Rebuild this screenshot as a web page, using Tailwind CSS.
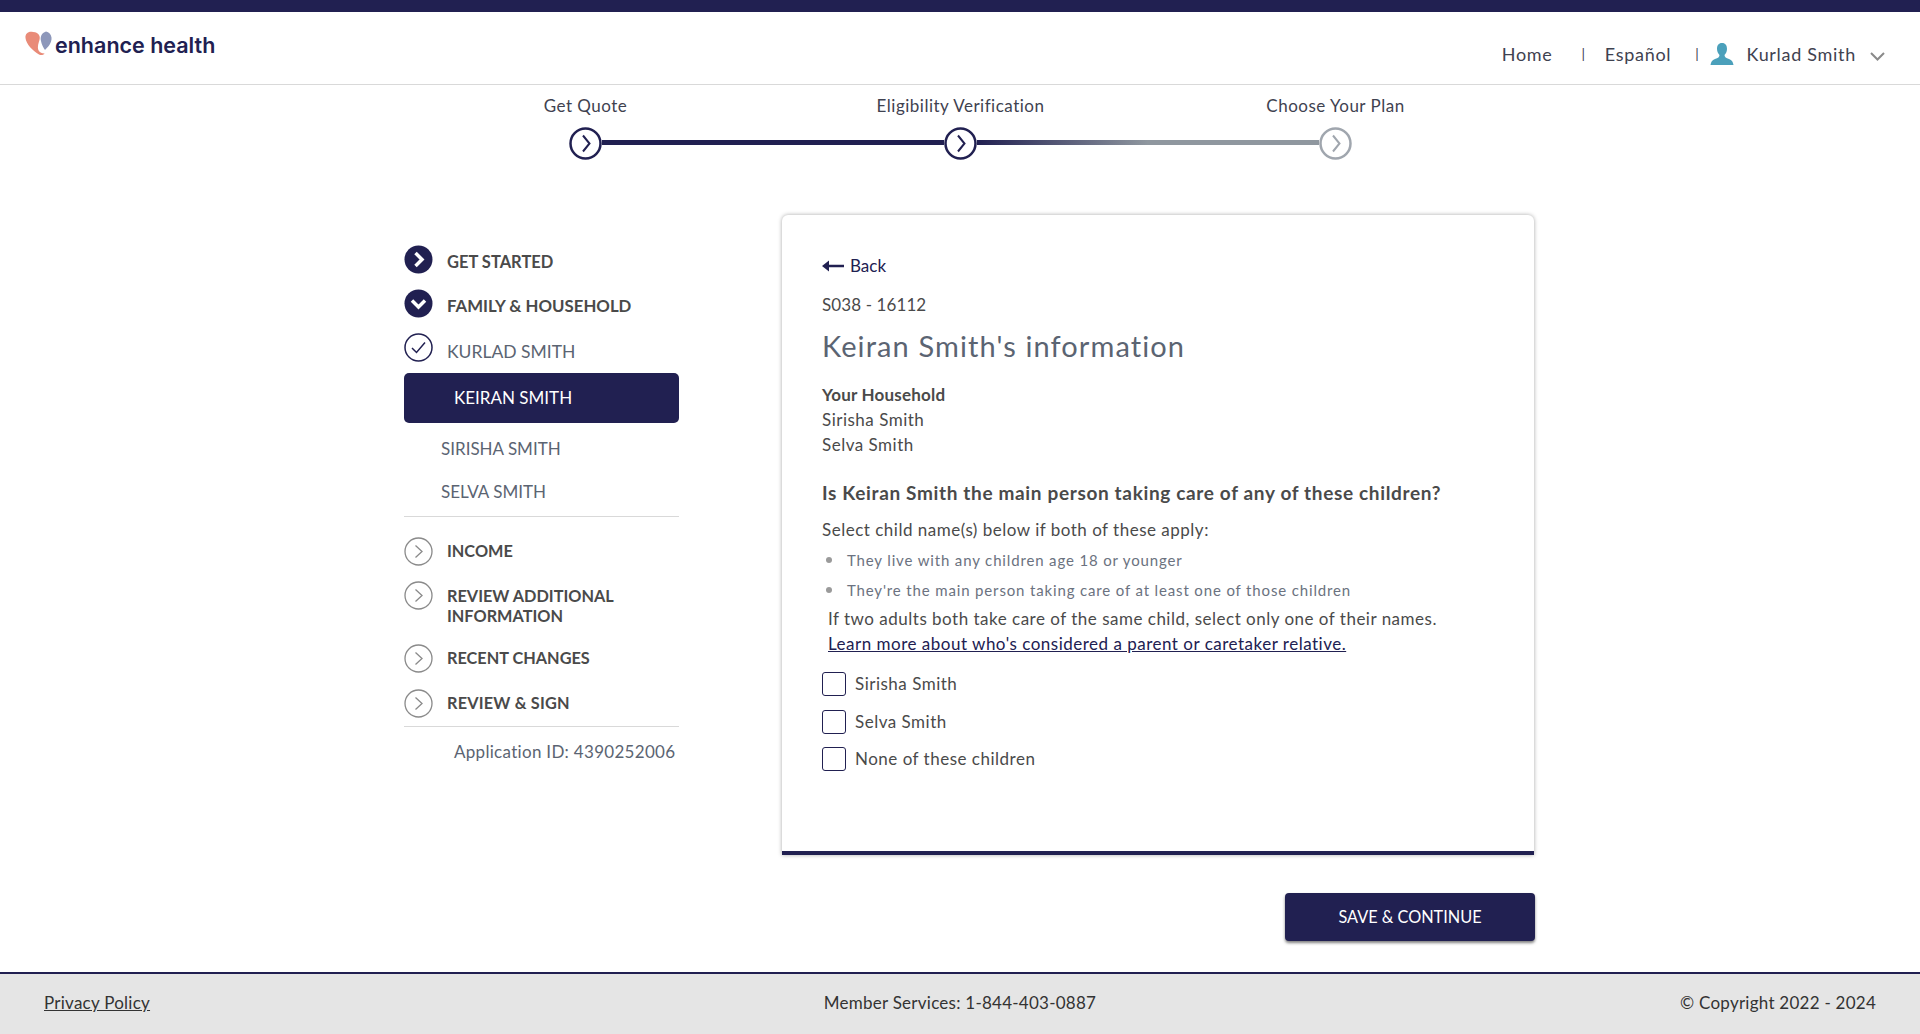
<!DOCTYPE html>
<html lang="en">
<head>
    <meta charset="UTF-8">
    <meta name="viewport" content="width=device-width, initial-scale=1.0">
    <title>Enhance Health</title>
    <script src="https://cdn.jsdelivr.net/npm/@tailwindcss/browser@4"></script>
</head>
<body class="bg-white h-screen flex flex-col font-['Lato','Liberation_Sans',sans-serif] text-[17px] tracking-[0.5px] text-[#4a4a4a]">
    <!-- Header -->
    <div class="h-3 bg-[#212051] shrink-0"></div>
    <header class="h-[73px] shrink-0 border-b border-[#d9d9d9] flex justify-between">
        <div class="flex items-start pl-[25px] pt-[19px]">
            <svg width="29" height="25" viewBox="0 0 29 25">
                <path d="M8 1C3.500 0 0 2.500 0.500 7C1 13 8 20 14 23.500C16 24.500 19 24 19.500 22.500C14 22 12.500 19 13 15C13.500 11 15.500 8 14.500 5C13.500 2.500 11 1 8 1Z" fill="#e98b78"/>
                <path d="M21 0.500C16.500 2 15 6 16 10C16.500 13 18.500 17 20 19C23 16 27 12 26.500 6.500C26 3 24 1 21 0.500Z" fill="#8d97ba"/>
            </svg>
            <span class="ml-[1px] mt-[2px] font-['Inter',sans-serif] font-semibold tracking-normal text-[21.500px] leading-[24px] text-[#212051]">enhance health</span>
        </div>
        <nav class="flex items-start pt-[29px] text-[#3f4250] text-[18px] tracking-[0.7px] leading-[26px]">
            <a>Home</a>
            <span class="ml-[29px] text-[14px]">|</span>
            <a class="ml-[19px]">Español</a>
            <span class="ml-[24px] text-[14px]">|</span>
            <svg class="ml-[11px] mt-[1px]" width="24" height="23" viewBox="0 0 24 23"><path d="M12 1C8.500 1 7 3.500 7 7C7 10 8.500 12 9.500 13C9.500 15 8 16 5 17C2 18 1 20 0.500 23H23.500C23 20 22 18 19 17C16 16 14.500 15 14.500 13C15.500 12 17 10 17 7C17 3.500 15.500 1 12 1Z" fill="#4ba0bb"/></svg>
            <span class="ml-[12px]">Kurlad Smith</span>
            <svg class="ml-[14px] mr-[35px] mt-[11px]" width="15" height="9" viewBox="0 0 15 9"><path d="M1 1L7.500 7.500L14 1" fill="none" stroke="#8a8a8a" stroke-width="2"/></svg>
        </nav>
    </header>

    <!-- Steps -->
    <div class="h-[130px] shrink-0 pl-[398px] pt-[9px]">
        <div class="flex text-[#3f4250] leading-[24px]">
            <div class="w-[375px] text-center">Get Quote</div>
            <div class="w-[375px] text-center">Eligibility Verification</div>
            <div class="w-[375px] text-center">Choose Your Plan</div>
        </div>
        <div class="flex items-center pl-[171px] mt-[9px]">
            <svg width="33" height="33" viewBox="0 0 33 33" class="shrink-0"><circle cx="16.500" cy="16.500" r="15" fill="#fff" stroke="#212051" stroke-width="2.500"/><path d="M14 8.500L20.500 16.500L14 24.500" fill="none" stroke="#212051" stroke-width="2"/></svg>
            <div class="w-[342px] h-[5px] bg-[#212051] -mt-[2px]"></div>
            <svg width="33" height="33" viewBox="0 0 33 33" class="shrink-0"><circle cx="16.500" cy="16.500" r="15" fill="#fff" stroke="#212051" stroke-width="2.500"/><path d="M14 8.500L20.500 16.500L14 24.500" fill="none" stroke="#212051" stroke-width="2"/></svg>
            <div class="w-[342px] h-[5px] bg-[linear-gradient(to_right,#212051,#8f979f_50%,#8f979f)] -mt-[2px]"></div>
            <svg width="33" height="33" viewBox="0 0 33 33" class="shrink-0"><circle cx="16.500" cy="16.500" r="15" fill="#fff" stroke="#a0a6ae" stroke-width="2.500"/><path d="M14 8.500L20.500 16.500L14 24.500" fill="none" stroke="#a0a6ae" stroke-width="2"/></svg>
        </div>
    </div>

    <main class="flex pl-[404px]">
        <!-- Sidebar -->
        <aside class="w-[275px] pt-[30px] shrink-0 uppercase tracking-normal">
            <div class="h-[44px] flex items-start text-[16.500px]">
                <svg width="29" height="29" viewBox="0 0 29 29" class="shrink-0"><circle cx="14.500" cy="14.500" r="14" fill="#212051"/><path d="M11.500 8L18 14.500L11.500 21" fill="none" stroke="#fff" stroke-width="3.500"/></svg>
                <span class="ml-[14px] mt-[5px] font-bold leading-[24px]">Get Started</span>
            </div>
            <div class="h-[44px] flex items-start text-[16.800px]">
                <svg width="29" height="29" viewBox="0 0 29 29" class="shrink-0"><circle cx="14.500" cy="14.500" r="14" fill="#212051"/><path d="M8 11.500L14.500 18L21 11.500" fill="none" stroke="#fff" stroke-width="3.500"/></svg>
                <span class="ml-[14px] mt-[5px] font-bold leading-[24px]">Family &amp; Household</span>
            </div>
            <div class="h-[40px] flex items-start">
                <svg width="29" height="29" viewBox="0 0 29 29" class="shrink-0"><circle cx="14.500" cy="14.500" r="13.500" fill="none" stroke="#212051" stroke-width="1.500"/><path d="M8 15L12.500 19.500L21 9.500" fill="none" stroke="#212051" stroke-width="1.500"/></svg>
                <span class="ml-[14px] mt-[7px] text-[17.500px] leading-[24px] text-[#5b6472]">Kurlad Smith</span>
            </div>
            <div class="h-[50px] bg-[#212051] rounded-[5px] text-white pl-[50px] flex items-center">Keiran Smith</div>
            <div class="h-[39px] pl-[37px] flex items-end leading-[26px] text-[#5b6472]">Sirisha Smith</div>
            <div class="h-[43px] pl-[37px] flex items-end leading-[26px] text-[#5b6472]">Selva Smith</div>
            <div class="border-t border-[#d9d9d9] mt-[11px]"></div>

            <div class="h-[45px] mt-[20px] flex items-start text-[16.300px]">
                <svg width="29" height="29" viewBox="0 0 29 29" class="shrink-0"><circle cx="14.500" cy="14.500" r="13.500" fill="none" stroke="#8a8a8a" stroke-width="1.300"/><path d="M11.500 8.500L18 14.500L11.500 20.500" fill="none" stroke="#8a8a8a" stroke-width="1.300"/></svg>
                <span class="ml-[14px] mt-[2px] font-bold leading-[24px]">Income</span>
            </div>
            <div class="h-[62px] flex items-start text-[16.300px]">
                <svg width="29" height="29" viewBox="0 0 29 29" class="shrink-0 -mt-[1px]"><circle cx="14.500" cy="14.500" r="13.500" fill="none" stroke="#8a8a8a" stroke-width="1.300"/><path d="M11.500 8.500L18 14.500L11.500 20.500" fill="none" stroke="#8a8a8a" stroke-width="1.300"/></svg>
                <span class="ml-[14px] mt-[4px] font-bold leading-[20px]">Review Additional Information</span>
            </div>
            <div class="h-[45px] flex items-start text-[16.300px]">
                <svg width="29" height="29" viewBox="0 0 29 29" class="shrink-0"><circle cx="14.500" cy="14.500" r="13.500" fill="none" stroke="#8a8a8a" stroke-width="1.300"/><path d="M11.500 8.500L18 14.500L11.500 20.500" fill="none" stroke="#8a8a8a" stroke-width="1.300"/></svg>
                <span class="ml-[14px] mt-[2px] font-bold leading-[24px]">Recent Changes</span>
            </div>
            <div class="h-[37px] flex items-start text-[16.300px] tracking-[0.2px]">
                <svg width="29" height="29" viewBox="0 0 29 29" class="shrink-0"><circle cx="14.500" cy="14.500" r="13.500" fill="none" stroke="#8a8a8a" stroke-width="1.300"/><path d="M11.500 8.500L18 14.500L11.500 20.500" fill="none" stroke="#8a8a8a" stroke-width="1.300"/></svg>
                <span class="ml-[14px] mt-[2px] font-bold leading-[24px]">Review &amp; Sign</span>
            </div>
            <div class="border-t border-[#d9d9d9]"></div>
            <div class="pl-[50px] mt-[13px] normal-case tracking-[0.3px] leading-[24px] text-[#5b6472] whitespace-nowrap">Application ID: 4390252006</div>
        </aside>

        <div class="w-[752px] ml-[103px] shrink-0">
            <!-- Card -->
            <section class="h-[640px] bg-white rounded-t-[6px] border-b-[4px] border-b-[#212051] shadow-[0_0_4px_rgba(0,0,0,0.35)] pl-[40px] pr-[30px] pt-[39px]">
                <a class="flex items-center h-[24px] text-[#212051]">
                    <svg width="22" height="12" viewBox="0 0 22 12"><path d="M0 6L7 0.500V4.800H22V7.200H7V11.500Z" fill="#212051"/></svg>
                    <span class="ml-[6px] tracking-normal">Back</span>
                </a>
                <p class="mt-[15px] leading-[24px] tracking-[0.1px]">S038 - 16112</p>
                <h2 class="mt-[11px] text-[29px] tracking-[1.1px] leading-[36px] text-[#5b6472]">Keiran Smith's information</h2>
                <p class="mt-[19px] font-bold tracking-[0.2px] leading-[24px]">Your Household</p>
                <p class="leading-[25px]">Sirisha Smith</p>
                <p class="leading-[25px]">Selva Smith</p>
                <p class="mt-[23px] text-[19px] tracking-[0.65px] font-bold leading-[26px] whitespace-nowrap">Is Keiran Smith the main person taking care of any of these children?</p>
                <p class="mt-[12px] leading-[24px]">Select child name(s) below if both of these apply:</p>
                <ul class="text-[15px] tracking-[0.85px] text-[#6b7280] mt-[6px]">
                    <li class="h-[30px] leading-[24px] flex items-start"><span class="w-[6px] h-[6px] rounded-full bg-[#9a9a9a] mt-[9px] ml-[4px] mr-[15px]"></span>They live with any children age 18 or younger</li>
                    <li class="h-[24px] leading-[24px] flex items-start"><span class="w-[6px] h-[6px] rounded-full bg-[#9a9a9a] mt-[9px] ml-[4px] mr-[15px]"></span>They're the main person taking care of at least one of those children</li>
                </ul>
                <p class="pl-[6px] mt-[4px] leading-[25px] whitespace-nowrap">If two adults both take care of the same child, select only one of their names.</p>
                <p class="pl-[6px] leading-[25px]"><a class="underline text-[#212051]">Learn more about who's considered a parent or caretaker relative.</a></p>
                <label class="flex items-center mt-[16px] h-[24px]"><span class="w-[24px] h-[24px] border border-[#212051] rounded-[3px] mr-[9px]"></span>Sirisha Smith</label>
                <label class="flex items-center mt-[14px] h-[24px]"><span class="w-[24px] h-[24px] border border-[#212051] rounded-[3px] mr-[9px]"></span>Selva Smith</label>
                <label class="flex items-center mt-[13px] h-[24px]"><span class="w-[24px] h-[24px] border border-[#212051] rounded-[3px] mr-[9px]"></span>None of these children</label>
            </section>
            <div class="flex justify-end mt-[38px] -mr-[1px]">
                <button class="w-[250px] h-[48px] bg-[#212051] text-white rounded-[4px] text-[16.300px] tracking-normal shadow-[0_2px_3px_rgba(0,0,0,0.5)]">SAVE &amp; CONTINUE</button>
            </div>
        </div>
    </main>

    <!-- Footer -->
    <footer class="mt-auto shrink-0 h-[62px] bg-[#e5e5e5] border-t-2 border-t-[#212051] grid grid-cols-3 items-center px-[44px] pb-[2px] text-[#333] tracking-[0.25px]">
        <a class="underline">Privacy Policy</a>
        <div class="text-center">Member Services: 1-844-403-0887</div>
        <div class="text-right">© Copyright 2022 - 2024</div>
    </footer>
</body>
</html>
